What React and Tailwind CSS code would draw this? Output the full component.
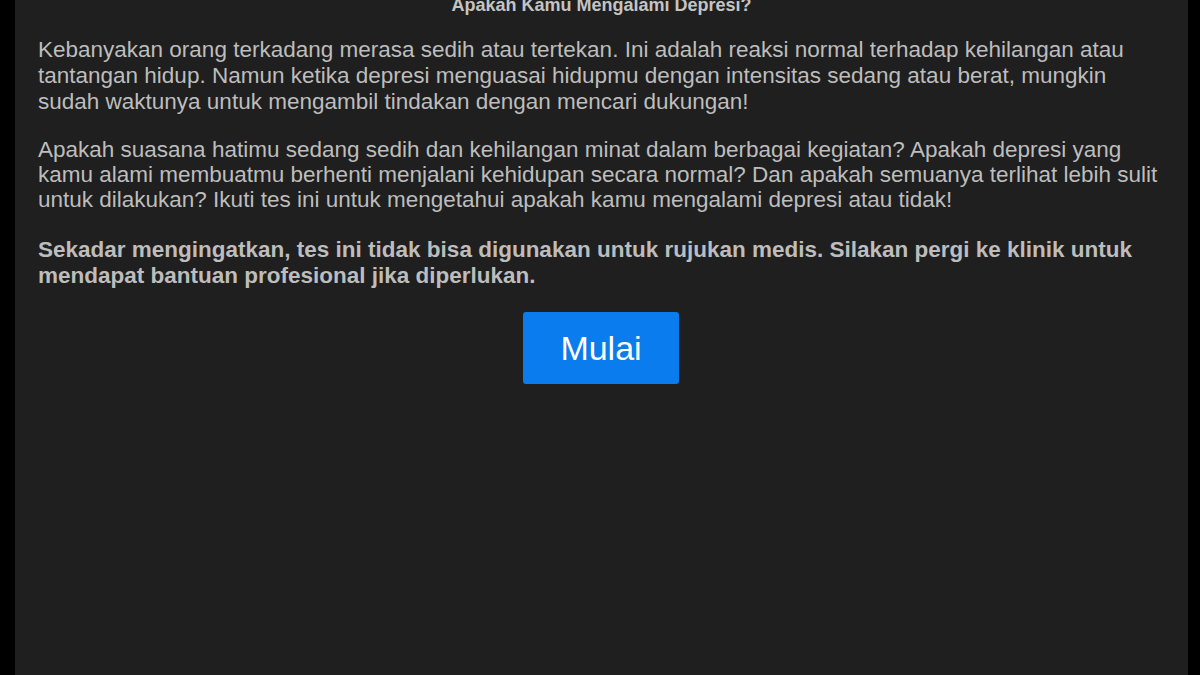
export default function App() {
  return (
    <div className="flex h-[675px] w-[1200px] overflow-hidden bg-black font-['Liberation_Sans',Arial,sans-serif]">
      <div className="ml-[15px] w-[1173px] h-full bg-[#1f1f1f] px-[23px] text-[#bdbdbd]">
        <h1 className="-mt-[7px] mb-[20px] text-center text-[18px] font-bold leading-[24px] text-[#c4c4c4]">
          Apakah Kamu Mengalami Depresi?
        </h1>
        <p className="mb-[22px] text-[22.5px] leading-[26px]">
          Kebanyakan orang terkadang merasa sedih atau tertekan. Ini adalah reaksi normal terhadap kehilangan atau tantangan hidup. Namun ketika depresi menguasai hidupmu dengan intensitas sedang atau berat, mungkin sudah waktunya untuk mengambil tindakan dengan mencari dukungan!
        </p>
        <p className="mb-[25px] text-[22.5px] leading-[25px]">
          Apakah suasana hatimu sedang sedih dan kehilangan minat dalam berbagai kegiatan? Apakah depresi yang kamu alami membuatmu berhenti menjalani kehidupan secara normal? Dan apakah semuanya terlihat lebih sulit untuk dilakukan? Ikuti tes ini untuk mengetahui apakah kamu mengalami depresi atau tidak!
        </p>
        <p className="text-[22.5px] font-bold leading-[26px]">
          Sekadar mengingatkan, tes ini tidak bisa digunakan untuk rujukan medis. Silakan pergi ke klinik untuk mendapat bantuan profesional jika diperlukan.
        </p>
        <div className="mt-[23px] flex justify-center">
          <button className="-ml-[1px] h-[72px] w-[156px] rounded-[3px] bg-[#0a7cee] text-[34px] text-white">
            Mulai
          </button>
        </div>
      </div>
    </div>
  );
}
